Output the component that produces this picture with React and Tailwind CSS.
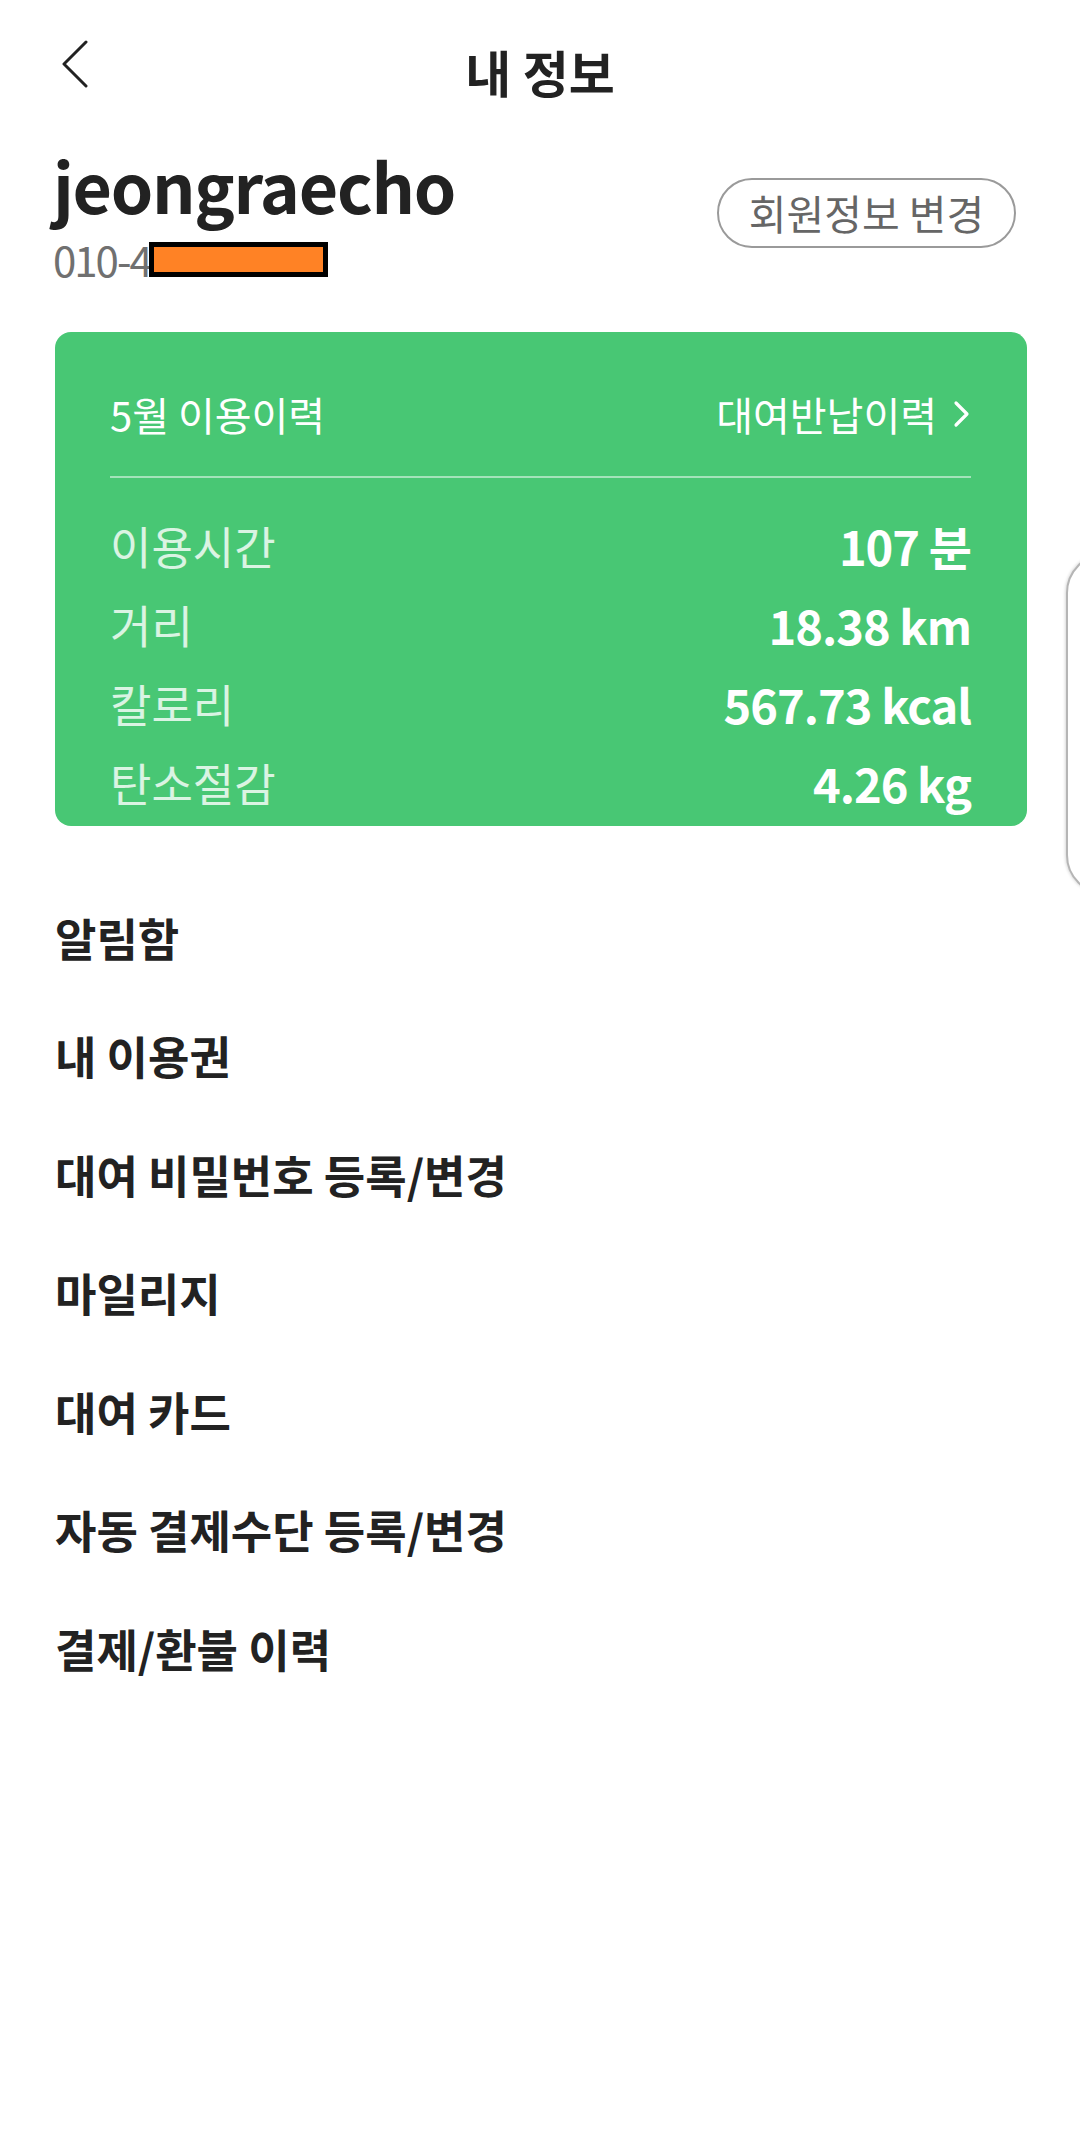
import React from 'react';

const stats = [
  { label: '이용시간', value: '107 분' },
  { label: '거리', value: '18.38 km' },
  { label: '칼로리', value: '567.73 kcal' },
  { label: '탄소절감', value: '4.26 kg' },
];

const menu = [
  '알림함',
  '내 이용권',
  '대여 비밀번호 등록/변경',
  '마일리지',
  '대여 카드',
  '자동 결제수단 등록/변경',
  '결제/환불 이력',
];

export default function App() {
  return (
    <div
      className="relative w-[1080px] h-[2140px] bg-white text-[#222] overflow-hidden"
      style={{ fontFamily: '"Noto Sans CJK KR", "Noto Sans", sans-serif' }}
    >
      {/* header */}
      <div className="relative flex h-[142px] items-center justify-center">
        <button className="absolute left-[56px] top-[38px] flex h-[52px] w-[36px] items-center justify-center">
          <svg width="30" height="48" viewBox="0 0 30 48" fill="none">
            <polyline points="27,2 5,24 27,46" stroke="#222" strokeWidth="3" strokeLinecap="round" strokeLinejoin="round" />
          </svg>
        </button>
        <h1 className="text-[50px] font-bold leading-none">내 정보</h1>
      </div>

      {/* profile */}
      <div className="flex items-center justify-between pl-[53px] pr-[64px] pt-[9px]">
        <div className="flex flex-col">
          <p className="text-[68px] font-bold leading-[68px] tracking-[-1.3px]">jeongraecho</p>
          <div className="mt-[19px] flex items-center">
            <span className="text-[42px] leading-[42px] tracking-[-2px] text-[#707070]">010-4</span>
            <span className="ml-[-2px] h-[35px] w-[179px] border-[5px] border-black bg-[#FF8225]" />
          </div>
        </div>
        <button className="mt-[-6px] flex h-[70px] w-[299px] items-center justify-center rounded-full border-[2.5px] border-[#9a9a9a] text-[41px] leading-none text-[#666]">
          회원정보 변경
        </button>
      </div>

      {/* usage card */}
      <div className="mx-[55px] mt-[52px] h-[494px] w-[972px] overflow-hidden rounded-[16px] bg-[#48C774] pl-[55px] pr-[56px] pt-[50px] text-white">
        <div className="flex h-[64px] items-center justify-between">
          <span className="text-[40px] leading-none">5월 이용이력</span>
          <span className="flex items-center text-[40px] leading-none">
            대여반납이력
            <svg className="ml-[16px]" width="18" height="28" viewBox="0 0 18 28" fill="none">
              <polyline points="3,3 14,14 3,25" stroke="#fff" strokeWidth="3.2" strokeLinecap="round" strokeLinejoin="round" />
            </svg>
          </span>
        </div>
        <div className="mt-[30px] h-[2px] bg-white/50" />
        <div className="mt-[28px] flex flex-col">
          {stats.map((s) => (
            <div key={s.label} className="flex h-[79px] items-center justify-between">
              <span className="text-[45px] leading-none text-white/80">{s.label}</span>
              <span className="text-[47px] font-bold leading-none tracking-[-1px]">{s.value}</span>
            </div>
          ))}
        </div>
      </div>

      {/* menu */}
      <ul className="mt-[52px] flex flex-col pl-[55px]">
        {menu.map((m) => (
          <li key={m} className="flex h-[118.5px] items-center text-[45px] font-bold leading-none">
            {m}
          </li>
        ))}
      </ul>

      {/* floating side tab */}
      <div className="absolute left-[1066px] top-[553px] h-[342px] w-[60px] rounded-l-[40px] border-[2px] border-[#b5b5b5] bg-white shadow-[-1px_0_3px_rgba(0,0,0,0.15)]" />
    </div>
  );
}
